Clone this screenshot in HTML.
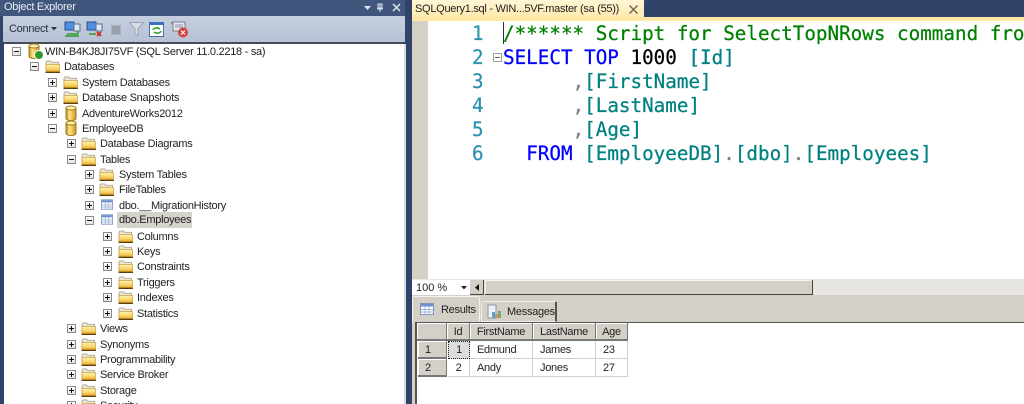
<!DOCTYPE html>
<html><head><meta charset="utf-8"><style>
html,body{margin:0;padding:0;background:#fff}
#p{position:relative;width:1024px;height:404px;overflow:hidden;background:#2f4468;font-family:"Liberation Sans",sans-serif;font-size:11px;letter-spacing:-.28px;color:#222;filter:blur(.3px)}
#p div,#p svg{position:absolute}
.t{white-space:nowrap;line-height:16px;height:16px}
.c{font-family:"DejaVu Sans Mono",monospace;font-size:19.25px;letter-spacing:0;line-height:24px;height:24px;white-space:pre;left:503px;-webkit-text-stroke:.25px}
.n{font-family:"DejaVu Sans Mono",monospace;font-size:19.25px;letter-spacing:0;line-height:24px;height:24px;color:#2b91af;left:472px;-webkit-text-stroke:.2px}
.e{width:9px;height:9px;border:1px solid #8a8a8a;background:linear-gradient(#fff,#e4e4e4);box-sizing:border-box}
.e::before{content:"";position:absolute;left:1px;top:3px;width:5px;height:1px;background:#111}
.p::after{content:"";position:absolute;left:3px;top:1px;width:1px;height:5px;background:#111}
.h{background:#d4d0c8;border-right:1px solid #777;border-bottom:2px solid #777;box-shadow:inset 1px 1px 0 #fff;box-sizing:border-box;text-align:center;line-height:18px;font-size:11px;color:#222}
.d{background:#fff;border-right:1px solid #d4d0c8;border-bottom:1px solid #d4d0c8;box-sizing:border-box;line-height:19px;font-size:11px;color:#222;white-space:nowrap}
</style></head><body><div id="p">
<svg width="0" height="0" style="position:absolute"><defs>
<linearGradient id="fg" x1="0" y1="0" x2="0" y2="1"><stop offset="0" stop-color="#fff2b0"/><stop offset=".55" stop-color="#fbd568"/><stop offset="1" stop-color="#e0a020"/></linearGradient>
<linearGradient id="cy" x1="0" y1="0" x2="1" y2="0"><stop offset="0" stop-color="#b88a1e"/><stop offset=".35" stop-color="#ffe68a"/><stop offset="1" stop-color="#c8961e"/></linearGradient>
<symbol id="f" viewBox="0 0 16 14"><path d="M1 12.5V2.500l1-1.500h4l1 1.500h7.500v10z" fill="#ece6d2" stroke="#b0a890"/><path d="M1 13V5h14.500v8z" fill="url(#fg)" stroke="#c8a448" stroke-width=".8"/><path d="M.5 13.300h15.500" stroke="#5a4008" stroke-width="1.400"/></symbol>
<symbol id="b" viewBox="0 0 12 16"><path d="M1 3v10c0 3.500 10 3.500 10 0V3z" fill="url(#cy)" stroke="#a07a1a"/><ellipse cx="6" cy="3" rx="5" ry="2" fill="#fff2b0" stroke="#a07a1a"/></symbol>
<symbol id="g" viewBox="0 0 14 12"><rect x=".5" y=".5" width="13" height="11" fill="#fff" stroke="#7f93bd"/><rect x="1" y="1" width="12" height="2.500" fill="#6f8fd0"/><path d="M1 6.500h12M1 9h12M5 3.500v8M9 3.500v8" stroke="#9db3da"/></symbol>
</defs></svg>

<!-- Left panel -->
<div style="left:0;top:0;width:412px;height:404px;background:#2f4468"></div>
<div style="left:0;top:0;width:405px;height:16px;background:#41567c"></div>
<div class="t" style="left:4px;top:0;color:#e8edf5;line-height:15px">Object Explorer</div>
<svg style="left:364px;top:3px" width="40" height="10" viewBox="0 0 40 10"><path d="M0 3h7L3.500 7z" fill="#dfe5ef"/><path d="M16 1v5M14 1h4v4h-4zM13 6h6M16 6v3" stroke="#dfe5ef" fill="none"/><path d="M29 1l7 7M36 1l-7 7" stroke="#dfe5ef" stroke-width="1.500"/></svg>
<div style="left:3px;top:16px;width:402px;height:26px;background:linear-gradient(#c4cede,#b6c2d5)"></div>
<div class="t" style="left:9px;top:21px;color:#2a3240">Connect</div>
<svg style="left:51px;top:27px" width="6" height="4"><path d="M0 0h6L3 3.500z" fill="#333"/></svg>
<svg style="left:64px;top:21px" width="18" height="16" viewBox="0 0 18 16"><rect x="1" y="1" width="9" height="8" fill="#4f8fe0" stroke="#2a4f90"/><rect x="10" y="3" width="6" height="7" fill="#dde6f3" stroke="#5a6f90"/><path d="M3 13h11M14 13v-3M1 15h14" stroke="#2f9a2f" stroke-width="1.500"/></svg>
<svg style="left:86px;top:21px" width="18" height="16" viewBox="0 0 18 16"><rect x="1" y="1" width="9" height="8" fill="#4f8fe0" stroke="#2a4f90"/><rect x="10" y="3" width="6" height="7" fill="#dde6f3" stroke="#5a6f90"/><path d="M3 13h7" stroke="#2f9a2f" stroke-width="1.500"/><path d="M11 11l4 4M15 11l-4 4" stroke="#d82020" stroke-width="1.700"/></svg>
<div style="left:111px;top:25px;width:8px;height:8px;background:#98a0ac;border:1px solid #a8b0bc"></div>
<svg style="left:129px;top:22px" width="15" height="14" viewBox="0 0 15 14"><path d="M.5 .5h14L9 7v6H6V7z" fill="#d8dde5" stroke="#9aa2ae"/></svg>
<div style="left:149px;top:22px;width:15px;height:15px;background:#fff;border:1px solid #4a6fa8;box-sizing:border-box;border-top:3px solid #3d6fc0"></div>
<svg style="left:152px;top:26px" width="10" height="9"><path d="M1 4a4 3 0 0 1 7-1M9 5a4 3 0 0 1-7 1" stroke="#2e9a2e" stroke-width="1.600" fill="none"/></svg>
<svg style="left:171px;top:21px" width="18" height="17" viewBox="0 0 18 17"><path d="M2 1h12v9H2zM2 1c-2 0-2 2 0 2" fill="#e5e8ee" stroke="#7a8290"/><path d="M4 4h8M4 6h8" stroke="#8a92a0"/><circle cx="12" cy="11.500" r="5" fill="#d84040"/><path d="M10 9.500l4 4M14 9.500l-4 4" stroke="#fff" stroke-width="1.200"/></svg>
<div style="left:3px;top:42px;width:401px;height:2px;background:#444c58"></div>
<div style="left:4px;top:44px;width:400px;height:360px;background:#fff"></div>
<div style="left:404px;top:44px;width:2px;height:360px;background:#d8dce2"></div>

<!-- Tree -->
<div class="e" style="left:12px;top:47px"></div>
<svg style="left:28px;top:43px" width="12" height="16"><use href="#b"/></svg><div style="left:34px;top:50px;width:8px;height:8px;border-radius:50%;background:#2c9a2c;border:1px solid #fff"></div>
<div class="t" style="left:45px;top:44px">WIN-B4KJ8JI75VF (SQL Server 11.0.2218 - sa)</div>
<div class="e" style="left:30px;top:62px"></div>
<svg style="left:45px;top:60px" width="15" height="13"><use href="#f"/></svg><div class="t" style="left:64px;top:59px">Databases</div>
<div class="e p" style="left:48px;top:78px"></div>
<svg style="left:63px;top:76px" width="15" height="13"><use href="#f"/></svg><div class="t" style="left:82px;top:75px">System Databases</div>
<div class="e p" style="left:48px;top:93px"></div>
<svg style="left:63px;top:91px" width="15" height="13"><use href="#f"/></svg><div class="t" style="left:82px;top:90px">Database Snapshots</div>
<div class="e p" style="left:48px;top:109px"></div>
<svg style="left:65px;top:105px" width="12" height="16"><use href="#b"/></svg><div class="t" style="left:82px;top:106px">AdventureWorks2012</div>
<div class="e" style="left:48px;top:124px"></div>
<svg style="left:65px;top:120px" width="12" height="16"><use href="#b"/></svg><div class="t" style="left:82px;top:121px">EmployeeDB</div>
<div class="e p" style="left:67px;top:139px"></div>
<svg style="left:81px;top:137px" width="15" height="13"><use href="#f"/></svg><div class="t" style="left:100px;top:136px">Database Diagrams</div>
<div class="e" style="left:67px;top:155px"></div>
<svg style="left:81px;top:153px" width="15" height="13"><use href="#f"/></svg><div class="t" style="left:100px;top:152px">Tables</div>
<div class="e p" style="left:85px;top:170px"></div>
<svg style="left:99px;top:168px" width="15" height="13"><use href="#f"/></svg><div class="t" style="left:119px;top:167px">System Tables</div>
<div class="e p" style="left:85px;top:185px"></div>
<svg style="left:99px;top:183px" width="15" height="13"><use href="#f"/></svg><div class="t" style="left:119px;top:182px">FileTables</div>
<div class="e p" style="left:85px;top:201px"></div>
<svg style="left:101px;top:199px" width="12" height="11"><use href="#g"/></svg><div class="t" style="left:119px;top:198px">dbo.__MigrationHistory</div>
<div class="e" style="left:85px;top:216px"></div>
<svg style="left:101px;top:214px" width="12" height="11"><use href="#g"/></svg>
<div style="left:117px;top:212px;width:75px;height:16px;background:#d6d3cb"></div><div class="t" style="left:119px;top:212px">dbo.Employees</div>
<div class="e p" style="left:103px;top:232px"></div>
<svg style="left:118px;top:230px" width="15" height="13"><use href="#f"/></svg><div class="t" style="left:137px;top:229px">Columns</div>
<div class="e p" style="left:103px;top:247px"></div>
<svg style="left:118px;top:245px" width="15" height="13"><use href="#f"/></svg><div class="t" style="left:137px;top:244px">Keys</div>
<div class="e p" style="left:103px;top:262px"></div>
<svg style="left:118px;top:260px" width="15" height="13"><use href="#f"/></svg><div class="t" style="left:137px;top:259px">Constraints</div>
<div class="e p" style="left:103px;top:278px"></div>
<svg style="left:118px;top:276px" width="15" height="13"><use href="#f"/></svg><div class="t" style="left:137px;top:275px">Triggers</div>
<div class="e p" style="left:103px;top:293px"></div>
<svg style="left:118px;top:291px" width="15" height="13"><use href="#f"/></svg><div class="t" style="left:137px;top:290px">Indexes</div>
<div class="e p" style="left:103px;top:309px"></div>
<svg style="left:118px;top:307px" width="15" height="13"><use href="#f"/></svg><div class="t" style="left:137px;top:306px">Statistics</div>
<div class="e p" style="left:67px;top:324px"></div>
<svg style="left:81px;top:322px" width="15" height="13"><use href="#f"/></svg><div class="t" style="left:100px;top:321px">Views</div>
<div class="e p" style="left:67px;top:340px"></div>
<svg style="left:81px;top:338px" width="15" height="13"><use href="#f"/></svg><div class="t" style="left:100px;top:337px">Synonyms</div>
<div class="e p" style="left:67px;top:355px"></div>
<svg style="left:81px;top:353px" width="15" height="13"><use href="#f"/></svg><div class="t" style="left:100px;top:352px">Programmability</div>
<div class="e p" style="left:67px;top:370px"></div>
<svg style="left:81px;top:368px" width="15" height="13"><use href="#f"/></svg><div class="t" style="left:100px;top:367px">Service Broker</div>
<div class="e p" style="left:67px;top:386px"></div>
<svg style="left:81px;top:384px" width="15" height="13"><use href="#f"/></svg><div class="t" style="left:100px;top:383px">Storage</div>
<div class="e p" style="left:67px;top:401px"></div>
<svg style="left:81px;top:399px" width="15" height="13"><use href="#f"/></svg><div class="t" style="left:100px;top:398px">Security</div>

<!-- Editor -->
<div style="left:412px;top:0;width:612px;height:17px;background:#2f4468"></div>
<div style="left:412px;top:0;width:232px;height:18px;background:linear-gradient(#fff6d6,#ffe9ad)"></div>
<div class="t" style="left:415px;top:1px;color:#222">SQLQuery1.sql - WIN...5VF.master (sa (55))</div>
<svg style="left:629px;top:5px" width="9" height="9"><path d="M.5 .5l8 8M8.500 .5l-8 8" stroke="#6e6a5c" stroke-width="1.500"/></svg>
<div style="left:412px;top:17px;width:612px;height:4px;background:#ffe8a6"></div>
<div style="left:412px;top:21px;width:612px;height:258px;background:#fff"></div>
<div style="left:412px;top:21px;width:16px;height:258px;background:#d4d0c8"></div>
<div class="n" style="top:22px">1</div>
<div class="n" style="top:46px">2</div>
<div class="n" style="top:70px">3</div>
<div class="n" style="top:94px">4</div>
<div class="n" style="top:118px">5</div>
<div class="n" style="top:142px">6</div>
<div style="left:503px;top:22px;width:1px;height:22px;background:#333"></div>
<div style="left:493px;top:53px;width:7px;height:7px;border:1px solid #a0a0a0;background:#fff"></div><div style="left:495px;top:57px;width:5px;height:1px;background:#666"></div>
<div class="c" style="top:22px;color:#008000">/****** Script for SelectTopNRows command fro</div>
<div class="c" style="top:46px"><span style="color:#00f">SELECT TOP</span> <span style="color:#000">1000</span> <span style="color:#008080">[Id]</span></div>
<div class="c" style="top:70px;color:#008080">      <span style="color:#808080">,</span>[FirstName]</div>
<div class="c" style="top:94px;color:#008080">      <span style="color:#808080">,</span>[LastName]</div>
<div class="c" style="top:118px;color:#008080">      <span style="color:#808080">,</span>[Age]</div>
<div class="c" style="top:142px;color:#008080">  <span style="color:#00f">FROM</span> [EmployeeDB]<span style="color:#808080">.</span>[dbo]<span style="color:#808080">.</span>[Employees]</div>

<!-- Scrollbar row -->
<div style="left:412px;top:279px;width:612px;height:125px;background:#d4d0c8"></div>
<div style="left:412px;top:279px;width:612px;height:16px;background:#e8e6e1"></div>
<div style="left:412px;top:280px;width:58px;height:15px;background:#fff"></div>
<div class="t" style="left:416px;top:280px;color:#222;letter-spacing:0">100 %</div>
<svg style="left:461px;top:286px" width="6" height="4"><path d="M0 0h6L3 3.500z" fill="#222"/></svg>
<div style="left:470px;top:280px;width:14px;height:15px;background:#d4d0c8;border-right:1px solid #444;border-bottom:1px solid #444;box-sizing:border-box"></div>
<svg style="left:475px;top:284px" width="4" height="7"><path d="M4 0v7L0 3.500z" fill="#111"/></svg>
<div style="left:485px;top:280px;width:328px;height:15px;background:#d4d0c8;border-right:1px solid #444;border-bottom:1px solid #444;box-sizing:border-box;box-shadow:inset 1px 1px 0 #f4f2ee"></div>

<!-- Tabs -->
<div style="left:412px;top:296px;width:68px;height:27px;background:#d4d0c8;border:1px solid #f4f2ee;border-bottom:none;border-radius:2px 2px 0 0;box-sizing:border-box"></div>
<svg style="left:420px;top:303px" width="14" height="12"><use href="#g"/></svg>
<div class="t" style="left:441px;top:302px;color:#222">Results</div>
<div style="left:481px;top:301px;width:76px;height:21px;background:#d4d0c8;border:1px solid #f0eee8;border-right:2px solid #555;border-radius:2px 2px 0 0;box-sizing:border-box"></div>
<svg style="left:487px;top:304px" width="15" height="15" viewBox="0 0 15 15"><path d="M1 1h8v13H1z" fill="#eef0f5" stroke="#8894aa"/><path d="M5 8h3v6H5z" fill="#5aa0d8"/><path d="M8 10h3v4H8z" fill="#e08a5a"/><path d="M11 7h3v7h-3z" fill="#6fb070"/></svg>
<div class="t" style="left:507px;top:304px;color:#222">Messages</div>

<!-- Grid -->
<div style="left:415px;top:322px;width:609px;height:82px;background:#fff;border-left:2px solid #555;border-top:1px solid #555;box-sizing:border-box"></div>
<div class="h" style="left:417px;top:323px;width:30px;height:18px"></div>
<div class="h" style="left:447px;top:323px;width:23px;height:18px">Id</div>
<div class="h" style="left:470px;top:323px;width:63px;height:18px">FirstName</div>
<div class="h" style="left:533px;top:323px;width:63px;height:18px">LastName</div>
<div class="h" style="left:596px;top:323px;width:32px;height:18px">Age</div>
<div class="h" style="left:418px;top:341px;width:29px;height:18px;text-align:left;padding-left:7px">1</div>
<div class="h" style="left:418px;top:359px;width:29px;height:18px;text-align:left;padding-left:7px">2</div>
<div class="d" style="left:448px;top:341px;width:22px;height:18px;background:#dcdcdc;border:1px dotted #222;text-align:center;line-height:17px">1</div>
<div class="d" style="left:470px;top:341px;width:63px;height:18px;padding-left:7px">Edmund</div>
<div class="d" style="left:533px;top:341px;width:63px;height:18px;padding-left:7px">James</div>
<div class="d" style="left:596px;top:341px;width:32px;height:18px;padding-left:7px">23</div>
<div class="d" style="left:448px;top:359px;width:22px;height:18px;text-align:center">2</div>
<div class="d" style="left:470px;top:359px;width:63px;height:18px;padding-left:7px">Andy</div>
<div class="d" style="left:533px;top:359px;width:63px;height:18px;padding-left:7px">Jones</div>
<div class="d" style="left:596px;top:359px;width:32px;height:18px;padding-left:7px">27</div>
</div></body></html>
